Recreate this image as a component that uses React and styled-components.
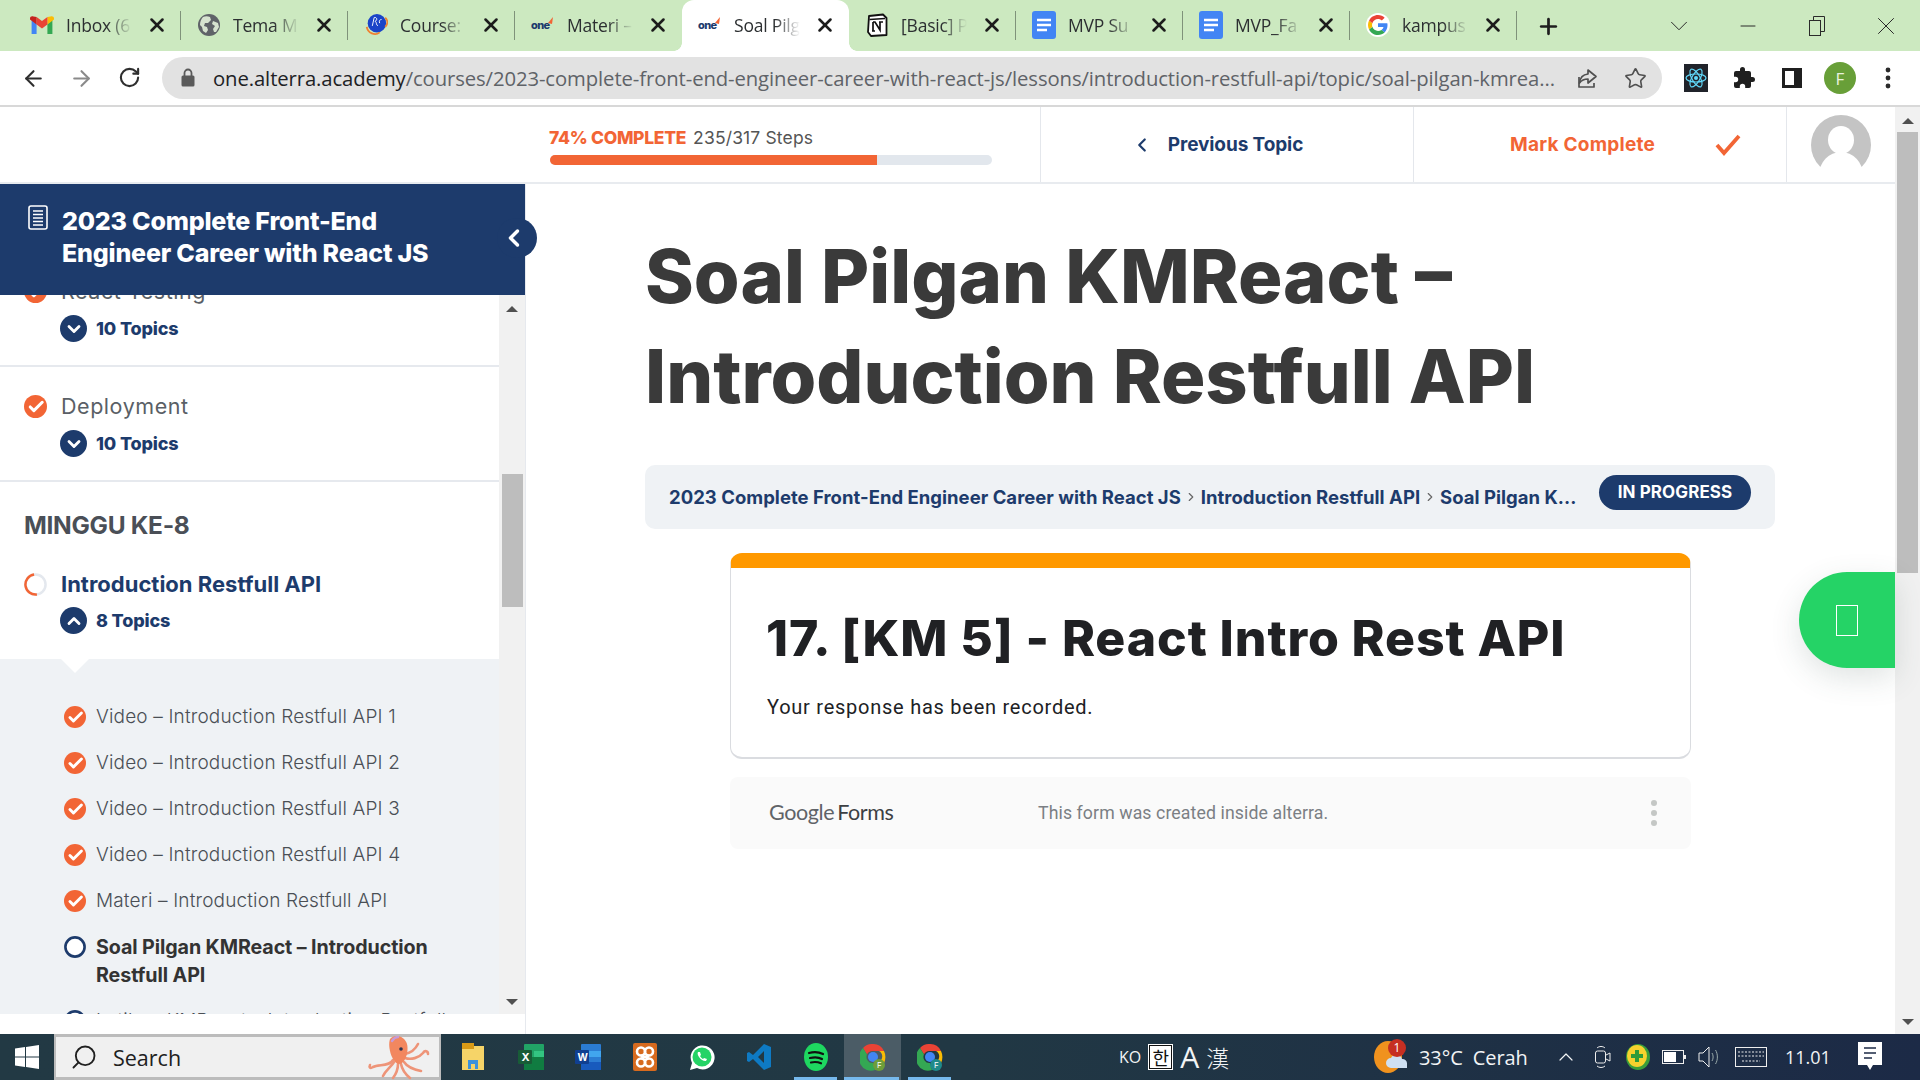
import React from "react";
import styled, { createGlobalStyle } from "styled-components";
import { ArrowLeft, ArrowRight, RotateCw, Star, Plus, X, Minus, ChevronDown, ChevronUp, ChevronLeft, ChevronRight, Search as SearchIcon } from "lucide-react";

const Global = createGlobalStyle`
  html, body { margin: 0; padding: 0; height: 100%; overflow: hidden; background: #fff; }
  * { box-sizing: border-box; }
  #root { height: 100%; }
`;

const NAVY = "#1d3b6c";
const ORANGE = "#f26535";
const UI = `"Inter", "Noto Sans", sans-serif`;
const SYS = `"Open Sans", "Noto Sans", sans-serif`;

const Screen = styled.div`
  width: 1920px; height: 1080px; display: flex; flex-direction: column; font-family: ${UI}; overflow: hidden;
`;

/* ---------- browser chrome ---------- */
const TabStrip = styled.div`
  height: 51px; background: #cce9c0; display: flex; padding-left: 14px; align-items: flex-end; flex: none;
`;
const TabItem = styled.div`
  width: 167px; height: 51px; display: flex; align-items: center; padding: 0 13px 1px 16px; gap: 12px;
  position: relative; flex: none;
  background: ${p => p.$active ? "#fff" : "transparent"};
  border-radius: ${p => p.$active ? "12px 12px 0 0" : "0"};
  &::after {
    content: ""; position: absolute; right: 0; top: 11px; bottom: 11px; width: 1px;
    background: ${p => p.$sep ? "#7f927a" : "transparent"};
  }
  ${p => p.$active ? `
    &::before {
      content: ""; position: absolute; left: -8px; bottom: 0; width: 8px; height: 8px;
      background: radial-gradient(circle at 0 0, transparent 7.5px, #fff 8px);
    }
    &::after {
      left: 100%; right: auto; top: auto; bottom: 0; width: 8px; height: 8px;
      background: radial-gradient(circle at 100% 0, transparent 7.5px, #fff 8px);
    }` : ""}
`;
const TabIcon = styled.span`
  width: 24px; height: 24px; display: flex; align-items: center; justify-content: center; flex: none;
`;
const TabTitle = styled.span`
  width: 66px; flex: none; white-space: nowrap; font: 400 17.5px ${SYS}; color: #2c2f31; letter-spacing: -0.2px;
  -webkit-mask-image: linear-gradient(90deg, #000 62%, transparent 100%);
  mask-image: linear-gradient(90deg, #000 62%, transparent 100%);
`;
const TabClose = styled.span`
  display: flex; margin-left: auto; flex: none;
`;
const NewTab = styled.div`
  margin-left: 19px; height: 50px; display: flex; align-items: center; color: #1e1e1e;
`;
const WinControls = styled.div`
  margin-left: auto; display: flex; height: 51px; align-items: center; color: #2a2a2a;
`;
const WinBtn = styled.div`
  width: ${p => p.$w || 70}px; height: 50px; display: flex; align-items: center; justify-content: center;
`;
const Toolbar = styled.div`
  height: 56px; background: #fff; display: flex; align-items: center; flex: none; border-bottom: 2px solid #d8d8d8;
`;
const NavBtn = styled.div`
  width: ${p => p.$w || 48}px; display: flex; justify-content: center; color: ${p => p.$dim ? "#8a8a8a" : "#2f2f2f"};
`;
const NavGroup = styled.div`
  display: flex; width: 162px; padding-left: 9px; flex: none;
`;
const Omnibox = styled.div`
  width: 1500px; height: 42px; border-radius: 21px; background: #e2e2e2; display: flex; align-items: center; padding: 0 3px 0 18px; flex: none;
`;
const UrlText = styled.div`
  margin-left: 17px; width: 1345px; flex: none; font: 400 20.3px ${SYS}; color: #5f6368; white-space: nowrap; letter-spacing: -0.1px;
  b { font-weight: 400; color: #202124; }
`;
const OmniIcon = styled.div`
  width: 48px; flex: none; display: flex; justify-content: center; color: #505050; margin-left: ${p => p.$ml || 0}px;
`;
const ExtIcons = styled.div`
  display: flex; align-items: center; margin-left: 10px;
`;
const ExtCell = styled.div`
  width: 48px; display: flex; justify-content: center;
`;
const Profile = styled.div`
  width: 32px; height: 32px; border-radius: 50%; background: #689f38; color: #e9f2df; display: flex; align-items: center; justify-content: center; font: 400 17px ${SYS};
`;

/* ---------- page ---------- */
const Viewport = styled.div`
  flex: 1; display: flex; min-height: 0; position: relative; background: #fff;
`;
const PageCol = styled.div`
  flex: 1; display: flex; flex-direction: column; min-width: 0;
`;
const HeaderBar = styled.div`
  height: 77px; display: flex; border-bottom: 2px solid #e8ebef; flex: none;
`;
const ProgressCell = styled.div`
  width: 516px; padding: 19px 0 0 24px; border-right: 1px solid #e4e7ec; margin-left: 525px; flex: none;
`;
const ProgressText = styled.div`
  font: 400 17.5px/24px ${UI}; color: #555; letter-spacing: 0.15px; white-space: nowrap;
  b { font-weight: 800; color: ${ORANGE}; margin-right: 7px; font-size: 17.5px; letter-spacing: -0.3px; }
`;
const ProgressTrack = styled.div`
  margin-top: 5px; margin-left: 1px; width: 442px; height: 10px; border-radius: 5px; background: #e2e7ed; overflow: hidden;
`;
const ProgressFill = styled.div`
  height: 100%; background: ${ORANGE};
`;
const HeadAction = styled.div`
  width: 373px; display: flex; align-items: center; justify-content: ${p => p.$between ? "space-between" : "center"};
  padding: ${p => p.$between ? "0 45px 0 96px" : "0 20px 0 0"}; border-right: 1px solid #e4e7ec; flex: none;
  color: ${p => p.$orange ? ORANGE : NAVY}; font: 700 19px ${UI}; gap: 15px; letter-spacing: ${p => p.$orange ? "0.25px" : "-0.1px"};
`;
const AvatarCell = styled.div`
  flex: 1; display: flex; padding: 8px 0 0 24px;
`;
const BodyRow = styled.div`
  flex: 1; display: flex; min-height: 0;
`;
const Sidebar = styled.aside`
  width: 526px; flex: none; display: flex; flex-direction: column; border-right: 1px solid #e6e9ee; position: relative; padding-bottom: 20px;
`;
const SideHead = styled.div`
  height: 111px; width: 525px; background: ${NAVY}; color: #fff; display: flex; gap: 14px; padding: 21px 0 0 28px; flex: none; position: relative; z-index: 2;
`;
const SideTitle = styled.div`
  font: 800 25px/32px ${UI}; letter-spacing: -0.2px; white-space: nowrap;
`;
const Toggle = styled.div`
  position: absolute; right: -12px; top: 34px; width: 40px; height: 40px; border-radius: 50%; background: ${NAVY}; display: flex; align-items: center; justify-content: center; padding-right: 6px;
`;
const SideBody = styled.div`
  flex: 1; display: flex; min-height: 0;
`;
const SideList = styled.div`
  width: 499px; flex: none; overflow: hidden;
`;
const Lesson = styled.div`
  height: ${p => p.$h || 115}px; padding: 27px 0 0 24px; border-bottom: ${p => p.$line ? "2px solid #e6e9ee" : "none"}; margin-top: ${p => p.$mt || 0}px; background: #fff;
`;
const LessonTitle = styled.div`
  display: flex; align-items: center; gap: 14px; height: 24px; font: ${p => p.$open ? 700 : 400} ${p => p.$open ? 22 : 21.5}px/24px ${UI}; color: ${p => p.$open ? NAVY : "#5a5f66"}; letter-spacing: ${p => p.$open ? "0px" : "0.55px"};
`;
const TopicToggle = styled.div`
  display: flex; align-items: center; gap: 9px; margin: ${p => p.$mt ?? 12}px 0 0 36px; height: 27px; font: 800 18px ${UI}; color: ${NAVY}; letter-spacing: -0.15px;
`;
const RoundChevron = styled.span`
  width: 27px; height: 27px; border-radius: 50%; background: ${NAVY}; color: #fff; display: flex; align-items: center; justify-content: center;
`;
const Week = styled.div`
  height: 63px; padding: 30px 0 0 24px; font: 700 24.5px/26px ${UI}; color: #4a4f57; letter-spacing: -0.3px; background: #fff;
`;
const TopicPanel = styled.div`
  background: #eff2f5; padding-top: 35px; position: relative;
  &::before {
    content: ""; position: absolute; left: 61px; top: 0; border-left: 14px solid transparent; border-right: 14px solid transparent; border-top: 14px solid #fff;
  }
`;
const TopicRow = styled.div`
  display: flex; gap: 10px; padding: 9px 30px 9px 64px; font: ${p => p.$cur ? 700 : 300} ${p => p.$cur ? 19.7 : 19}px/28px ${UI}; color: ${p => p.$cur ? "#333" : "#4a4f55"}; letter-spacing: ${p => p.$cur ? "-0.1px" : "0.16px"};
`;
const TopicIcon = styled.span`
  flex: none; width: 22px; height: 28px; display: flex; align-items: center;
`;
const FakeTrack = styled.div`
  width: ${p => p.$w}px; flex: none; background: #f1f1f1; display: flex; flex-direction: column; align-items: center; position: relative;
`;
const ScrollArrow = styled.div`
  width: 0; height: 0; border-left: 6px solid transparent; border-right: 6px solid transparent; flex: none;
  ${p => p.$down ? "border-top: 6px solid #505050; margin-bottom: 9px;" : "border-bottom: 6px solid #505050; margin-top: 11px;"}
`;
const ScrollThumb = styled.div`
  width: ${p => p.$w}px; height: ${p => p.$h}px; background: #bdbdbd; margin-top: ${p => p.$top}px; flex: none;
`;
const Spacer = styled.div`
  flex: 1;
`;
const Content = styled.main`
  flex: 1; padding: 42px 0 0 119px; min-width: 0;
`;
const Title = styled.h1`
  margin: 0; font: 800 74px/100px ${UI}; color: #3a3a3a; letter-spacing: 0; width: 1000px;
`;
const Crumbs = styled.div`
  margin-top: 39px; width: 1130px; height: 64px; border-radius: 10px; background: #eff2f5; display: flex; align-items: center; padding: 0 24px;
`;
const CrumbText = styled.div`
  display: flex; align-items: center; gap: 2px; font: 700 18.5px ${UI}; color: ${NAVY}; white-space: nowrap; flex: 1; letter-spacing: 0.02px; margin-top: -1px;
`;
const CrumbSep = styled.span`
  color: #666; display: flex; margin: 0 1px;
`;
const Badge = styled.div`
  width: 152px; height: 35px; border-radius: 18px; background: ${NAVY}; color: #fff; font: 700 17px/34px ${UI}; text-align: center; letter-spacing: 0.1px; margin-top: -10px; flex: none;
`;
const FormWrap = styled.div`
  margin: 24px 0 0 85px; width: 961px;
`;
const FormCard = styled.div`
  height: 206px; border-radius: 12px; border: 1px solid #dadce0; border-top: 15px solid #ff9900; padding: 37px 30px 0 35px; border-bottom-width: 2px;
`;
const FormTitle = styled.div`
  font: 800 50px/66px ${UI}; color: #202124; letter-spacing: 0.9px; white-space: nowrap;
`;
const FormMsg = styled.div`
  margin: 22px 0 0 1px; font: 400 20px/28px Roboto, sans-serif; color: #202124; letter-spacing: 0.75px;
`;
const FormFoot = styled.div`
  margin-top: 18px; height: 72px; background: #fafafa; border-radius: 8px; display: flex; align-items: center; padding: 0 34px 0 39px;
`;
const GFLogo = styled.div`
  width: 269px; margin-top: -3px; font: 400 21.5px Lato, sans-serif; color: #5f6368; letter-spacing: -0.4px; word-spacing: -2px; span { color: #3c4043; }
`;
const FootNote = styled.div`
  flex: 1; font: 400 17.7px Roboto, sans-serif; color: #7b7f84; letter-spacing: 0.1px;
`;
const Dots = styled.div`
  display: flex; flex-direction: column; gap: 4px;
`;
const Dot = styled.span`
  width: 6px; height: 6px; border-radius: 50%; background: #c4c7c5;
`;
const Fab = styled.div`
  position: absolute; left: 1799px; top: 465px; width: 96px; height: 96px; border-radius: 48px 0 0 48px; background: #25d366; display: flex; align-items: center; justify-content: center;
  box-shadow: 0 10px 30px rgba(60,90,80,0.16); z-index: 3;
`;
const Tofu = styled.span`
  width: 22px; height: 31px; border: 1.5px solid #fff;
`;

/* ---------- taskbar ---------- */
const Taskbar = styled.div`
  height: 46px; flex: none; background: linear-gradient(90deg, #223944 0%, #213844 50%, #1c2a46 100%); display: flex; align-items: center; color: #f2f4f5;
`;
const StartBtn = styled.div`
  width: 54px; display: flex; justify-content: center;
`;
const SearchBox = styled.div`
  width: 387px; height: 46px; background: #f0f0f0; border: 3px solid #bcbcbc; border-width: 3px 2px 3px 2px; display: flex; align-items: center; padding-left: 14px; color: #202020; gap: 15px; position: relative; flex: none;
`;
const SearchLabel = styled.span`
  font: 400 21.5px ${SYS}; margin-top: 1px;
`;
const Octo = styled.span`
  position: absolute; right: 8px; bottom: -3px; display: flex;
`;
const Apps = styled.div`
  display: flex; padding-left: 4px; height: 46px; flex: none;
`;
const AppCell = styled.div`
  width: 57px; height: 46px; display: flex; align-items: center; justify-content: center; position: relative;
  background: ${p => p.$active ? "#4b5c66" : "transparent"};
  ${p => p.$run ? `&::after { content: ""; position: absolute; left: ${p.$active ? 0 : 7}px; right: ${p.$active ? 2 : 7}px; bottom: 0; height: 3px; background: #76b9ed; }` : ""}
`;
const Ime = styled.div`
  margin-left: 161px; display: flex; align-items: center; width: 254px; flex: none; font: 400 16px ${SYS};
`;
const HanBox = styled.span`
  margin-left: 8px; width: 23px; height: 24px; background: #fff; color: #111; border: 1px solid #111; outline: 1px solid #fff; display: flex; align-items: center; justify-content: center; font: 400 18px "Noto Sans CJK KR", sans-serif;
`;
const ImeA = styled.span`
  margin-left: 8px; font: 400 30px ${SYS}; line-height: 30px;
`;
const ImeHan = styled.span`
  margin-left: 7px; font: 300 23px "Noto Sans CJK TC", sans-serif;
`;
const Weather = styled.div`
  display: flex; align-items: center; width: 181px; flex: none; position: relative; gap: 12px; font: 400 20px ${SYS}; white-space: nowrap; letter-spacing: -0.1px;
`;
const WeatherBadge = styled.span`
  position: absolute; left: 15px; top: -1px; width: 18px; height: 18px; border-radius: 50%; background: #c62f22; color: #fff; font: 400 12px/18px ${SYS}; text-align: center;
`;
const Tray = styled.div`
  display: flex; align-items: center; flex: 1; padding-right: 36px;
`;
const TrayCell = styled.span`
  display: flex; align-items: center; justify-content: center; flex: none; margin-left: ${p => p.$ml || 0}px;
`;
const Clock = styled.span`
  margin-left: 18px; font: 400 18px ${SYS}; flex: none; width: 42px;
`;

/* ---------- icons ---------- */
const DoneIcon = ({ s = 22 }) => (
  <svg width={s} height={s} viewBox="0 0 24 24">
    <circle cx="12" cy="12" r="12" fill={ORANGE} />
    <path d="M6.500 12.500l3.800 3.800L19 7.600" fill="none" stroke="#fff" strokeWidth="3.200" strokeLinecap="round" strokeLinejoin="round" />
  </svg>
);
const PartIcon = () => (
  <svg width="23" height="23" viewBox="0 0 24 24">
    <circle cx="12" cy="12" r="10.500" fill="none" stroke="#e4e8ee" strokeWidth="2.600" />
    <path d="M12 1.500A10.500 10.500 0 0 0 12 22.500" transform="rotate(-8 12 12)" fill="none" stroke={ORANGE} strokeWidth="2.600" />
  </svg>
);
const TodoIcon = () => (
  <svg width="22" height="22" viewBox="0 0 22 22"><circle cx="11" cy="11" r="9.600" fill="#fff" stroke={NAVY} strokeWidth="2.600" /></svg>
);
const TickIcon = () => (
  <svg width="26" height="22" viewBox="0 0 26 22"><path d="M2 11l7 8L24 2" fill="none" stroke={ORANGE} strokeWidth="3.800" strokeLinejoin="miter" /></svg>
);
const GmailIcon = () => (
  <svg width="24" height="20" viewBox="0 0 24 18">
    <path d="M1.600 18V4l5 4v10z" fill="#4285f4" /><path d="M22.400 18V4l-5 4v10z" fill="#34a853" />
    <path d="M17.400 1v7.400L24 3.400V2.400C24 .6 22 -.4 20.500.6z" fill="#fbbc04" />
    <path d="M6.600 8.400V1L12 5l5.400-4v7.400L12 12.400z" fill="#ea4335" />
    <path d="M0 2.400v1L6.600 8.400V1L3.500.6C2-.4 0 .6 0 2.400z" fill="#c5221f" />
  </svg>
);
const GlobeIcon = () => (
  <svg width="22" height="22" viewBox="0 0 22 22">
    <circle cx="11" cy="11" r="11" fill="#5f6368" />
    <path d="M5 3c2-1 5-1 7 0l1 3-3 3-3 0-1 3 3 1 1 3-2 3-3-2-1-4-2-2c0-3 1-6 3-8zM15 7l5 2 1 4-3 5-2 0-1-3 2-3-3-2z" fill="#d6e3cf" />
  </svg>
);
const CourseIcon = () => (
  <svg width="26" height="26" viewBox="0 0 26 26">
    <circle cx="14" cy="11" r="10" fill="#1a44c8" />
    <path d="M3 15c1 7 9 10 14 6M23 5c3 3 3 7 0 10" fill="none" stroke="#f08030" strokeWidth="2" />
    <path d="M11 5c3-1 4 3 1 4 2 1 1 4 3 5M11 5l-2 9M19 7c-2 0-3 2-2 4" fill="none" stroke="#fff" strokeWidth="1" />
  </svg>
);
const OneLogo = () => (
  <svg width="24" height="20" viewBox="0 0 24 20">
    <text x="0" y="14" fontFamily="Inter, sans-serif" fontWeight="800" fontSize="11" letterSpacing="-0.6" fill="#1d3b6c">one</text>
    <path d="M17 8l5-6-1 7z" fill="#f26535" />
  </svg>
);
const NotionIcon = () => (
  <svg width="24" height="24" viewBox="0 0 24 24">
    <path d="M4 3l14-1.500L21.500 5v17L6 23l-3-4z" fill="#fff" stroke="#111" strokeWidth="1.800" strokeLinejoin="round" />
    <path d="M4.500 6.500L20 5.500" stroke="#111" strokeWidth="1.600" />
    <path d="M8 9h2l5 8V9h2M8 9v9M7 18h3M14 9h4" fill="none" stroke="#111" strokeWidth="1.700" />
  </svg>
);
const DocsIcon = () => (
  <svg width="24" height="28" viewBox="0 0 24 28">
    <rect width="24" height="28" rx="3" fill="#4285f4" />
    <path d="M5 9h14M5 14h14M5 19h10" stroke="#fff" strokeWidth="2.400" />
  </svg>
);
const GoogleIcon = () => (
  <svg width="24" height="24" viewBox="0 0 48 48">
    <circle cx="24" cy="24" r="24" fill="#fff" />
    <path d="M43 24.500c0-1.400-.1-2.600-.4-3.800H24v7.300h10.900c-.5 2.500-1.900 4.500-4 5.900l6.400 5C41 34.500 43 30 43 24.500z" fill="#4285f4" />
    <path d="M24 44c5.400 0 9.900-1.800 13.300-4.900l-6.400-5c-1.800 1.200-4.100 1.900-6.900 1.900-5.300 0-9.700-3.500-11.300-8.300l-6.600 5.100C9.400 39.500 16.100 44 24 44z" fill="#34a853" />
    <path d="M12.700 27.700c-.4-1.200-.6-2.400-.6-3.700s.2-2.500.6-3.700l-6.600-5.100C4.700 17.900 4 20.900 4 24s.7 6.100 2.100 8.800z" fill="#fbbc04" />
    <path d="M24 12c2.900 0 5.600 1 7.600 3l5.700-5.700C33.900 6.100 29.400 4 24 4 16.100 4 9.400 8.500 6.100 15.200l6.600 5.100C14.300 15.500 18.700 12 24 12z" fill="#ea4335" />
  </svg>
);
const LockIcon = () => (
  <svg width="16" height="20" viewBox="0 0 16 20" style={{ flex: "none" }}><rect x="1.500" y="7.500" width="13" height="11" rx="1.500" fill="#5a5a5a" /><path d="M4.500 8V5a3.500 3.500 0 0 1 7 0v3" fill="none" stroke="#5a5a5a" strokeWidth="1.800" /></svg>
);
const ShareIcon = () => (
  <svg width="24" height="24" viewBox="0 0 24 24" fill="none" stroke="#505050" strokeWidth="1.700" strokeLinejoin="round">
    <path d="M4 11v10h15v-4" /><path d="M13 4l8 6.500-8 6.500v-4c-4 0-6.500 1.200-8.500 4 .5-5 3.500-8.500 8.500-9z" />
  </svg>
);
const ReactExt = () => (
  <svg width="24" height="28" viewBox="0 0 24 28">
    <rect width="24" height="28" fill="#20232a" />
    <g fill="none" stroke="#61dafb" strokeWidth="1.200">
      <ellipse cx="12" cy="14" rx="10" ry="4" /><ellipse cx="12" cy="14" rx="10" ry="4" transform="rotate(60 12 14)" /><ellipse cx="12" cy="14" rx="10" ry="4" transform="rotate(120 12 14)" />
    </g>
    <circle cx="12" cy="14" r="2" fill="#61dafb" />
  </svg>
);
const PuzzleIcon = () => (
  <svg width="24" height="24" viewBox="0 0 24 24"><path d="M20.500 11H19V7a2 2 0 0 0-2-2h-4V3.500a2.500 2.500 0 0 0-5 0V5H4a2 2 0 0 0-2 2v3.800h1.500a2.700 2.700 0 0 1 0 5.400H2V20a2 2 0 0 0 2 2h3.800v-1.500a2.700 2.700 0 0 1 5.400 0V22H17a2 2 0 0 0 2-2v-4h1.500a2.500 2.500 0 0 0 0-5z" fill="#1f1f1f" /></svg>
);
const PanelIcon = () => (
  <svg width="20" height="20" viewBox="0 0 20 20"><rect x="1.500" y="1.500" width="17" height="17" fill="none" stroke="#1f1f1f" strokeWidth="3" /><rect x="12" y="2" width="6" height="16" fill="#1f1f1f" /></svg>
);
const MenuDots = () => (
  <svg width="6" height="22" viewBox="0 0 6 22"><circle cx="3" cy="3" r="2.400" fill="#2a2a2a" /><circle cx="3" cy="11" r="2.400" fill="#2a2a2a" /><circle cx="3" cy="19" r="2.400" fill="#2a2a2a" /></svg>
);
const RestoreIcon = () => (
  <svg width="16" height="20" viewBox="0 0 16 20" fill="none" stroke="#2a2a2a" strokeWidth="1"><rect x="0.500" y="4.500" width="11" height="15" fill="#cce9c0" /><path d="M4.500 4.500V.5h11v15h-4" /></svg>
);
const BookIcon = () => (
  <svg width="20" height="25" viewBox="0 0 20 25" fill="none" stroke="#fff" style={{ flex: "none" }}><rect x="1" y="1" width="18" height="23" rx="2" strokeWidth="1.600" /><path d="M5 6h10M5 9.500h10M5 13h10M5 16.500h10M5 20h10" strokeWidth="1.500" /></svg>
);
const Avatar = () => (
  <svg width="60" height="60" viewBox="0 0 60 60">
    <defs><clipPath id="av"><circle cx="30" cy="30" r="30" /></clipPath></defs>
    <g clipPath="url(#av)"><rect width="60" height="60" fill="#c4c4c4" /></g>
    <ellipse cx="30" cy="25" rx="13" ry="14" fill="#fff" />
    <ellipse cx="30" cy="60" rx="22" ry="23" fill="#fff" />
    <rect x="0" y="55" width="60" height="5" fill="#fff" />
  </svg>
);
const WinLogo = () => (
  <svg width="24" height="24" viewBox="0 0 24 24" fill="#fff"><path d="M0 3.400l10-1.400v9.500H0zM11 1.900L24 0v11.500H11zM0 12.500h10V22L0 20.600zM11 12.500h13V24l-13-1.900z" /></svg>
);
const OctoIcon = () => (
  <svg width="64" height="46" viewBox="0 0 64 46" fill="none" strokeLinecap="round">
    <g stroke="#ee9478" strokeWidth="2.600">
      <path d="M26 26C22 33 12 30 6 33c-3 2-4 0-3-2" />
      <path d="M27 28c-3 5-8 8-11 14" />
      <path d="M31 30c0 5-2 10-5 14" />
      <path d="M34 30c1 5 4 10 9 14" />
      <path d="M37 28c4 6 12 8 17 9" />
      <path d="M38 24c6 2 14 0 18-5 2-3 5-2 5 1" />
      <path d="M38 20c5-1 10-4 13-10" />
    </g>
    <path d="M23 5c4-5 14-4 17 5 2 8-2 20-8 20S20 14 23 5z" fill="#f2875f" />
    <path d="M25 7c2-3 4-4 6-4" stroke="#c79ad6" strokeWidth="2.400" />
    <circle cx="34" cy="15" r="1.800" fill="#2d3350" />
  </svg>
);
const FolderIcon = () => (
  <svg width="24" height="28" viewBox="0 0 24 28"><rect y="3" width="22" height="24" fill="#f6d468" /><rect width="12" height="6" fill="#d99a16" /><path d="M6 26V17h10v9h-3v-5H9v5z" fill="#3c92dc" /></svg>
);
const ExcelIcon = () => (
  <svg width="26" height="26" viewBox="0 0 26 26"><rect x="6" width="20" height="26" rx="1" fill="#21a366" /><rect x="16" y="7" width="10" height="6" fill="#33c481" /><rect x="6" y="13" width="20" height="13" fill="#107c41" /><rect y="6" width="14" height="14" rx="1" fill="#185c37" /><text x="3.500" y="17" fontSize="11" fontWeight="700" fill="#fff" fontFamily="Inter">X</text></svg>
);
const WordIcon = () => (
  <svg width="26" height="26" viewBox="0 0 26 26"><rect x="6" width="20" height="26" rx="1" fill="#2b7cd3" /><rect x="6" y="7" width="20" height="6" fill="#41a5ee" /><rect x="6" y="18" width="20" height="8" fill="#185abd" /><rect y="6" width="14" height="14" rx="1" fill="#103f91" /><text x="2.500" y="17" fontSize="10" fontWeight="700" fill="#fff" fontFamily="Inter">W</text></svg>
);
const XamppIcon = () => (
  <svg width="24" height="28" viewBox="0 0 24 28"><rect width="24" height="28" rx="2" fill="#d76a1e" /><g fill="none" stroke="#fff" strokeWidth="2.600"><circle cx="8" cy="8.500" r="4" /><circle cx="16" cy="8.500" r="4" /><circle cx="8" cy="19.500" r="4" /><circle cx="16" cy="19.500" r="4" /><path d="M8 12.500L16 15.500M16 12.500L8 15.500" /></g></svg>
);
const WaIcon = () => (
  <svg width="26" height="28" viewBox="0 0 26 28"><path d="M1 27l2-7a12 12 0 1 1 5 5z" fill="#fff" /><circle cx="13" cy="14" r="9.500" fill="#25d366" /><path d="M9 9c-2 3 4 10 8 9l1-2-3-1-1 1c-1-.5-2.500-2-3-3l1-1-1-3z" fill="#fff" /></svg>
);
const VsIcon = () => (
  <svg width="24" height="28" viewBox="0 0 24 28"><path d="M17 1l7 3v20l-7 3L6 16l-4 3-2-1v-8l2-1 4 3zM17 8l-6 6 6 6z" fill="#0e7ac4" fillRule="evenodd" /></svg>
);
const SpotifyIcon = () => (
  <svg width="24" height="28" viewBox="0 0 24 28"><ellipse cx="12" cy="14" rx="12" ry="14" fill="#1ed760" /><g fill="none" stroke="#111" strokeWidth="2.200" strokeLinecap="round"><path d="M5 10c5-1.500 10-1 14 1" /><path d="M6 15c4-1 9-.7 12 1" /><path d="M7 19.500c4-1 7-.5 10 .8" /></g></svg>
);
const ChromeIcon = ({ badge = "#6d9e3a" }) => (
  <svg width="26" height="28" viewBox="0 0 26 28">
    <path d="M13 1a12 13 0 0 1 11 7H13a6 6 0 0 0-6 3.500L3 5a12 13 0 0 1 10-4z" fill="#ea4335" />
    <path d="M24 8a12 13 0 0 1-9 19l5-9a6 6 0 0 0-1-10z" fill="#fbbc04" />
    <path d="M3 5l4 6.500a6 6 0 0 0 6 8.500l2 7A12 13 0 0 1 3 5z" fill="#34a853" />
    <circle cx="13" cy="14" r="5" fill="#4285f4" />
    <circle cx="19" cy="22" r="6" fill={badge} />
    <text x="17" y="25" fontSize="8" fill="#fff" fontFamily="Inter">F</text>
  </svg>
);
const WeatherIcon = () => (
  <svg width="34" height="34" viewBox="0 0 34 34"><ellipse cx="15" cy="17" rx="14" ry="16" fill="#f0921e" /><path d="M34 28H18a5 5 0 0 1 0-10 6 6 0 0 1 11 1 4.500 4.500 0 0 1 5 4z" fill="#cfe0f2" /></svg>
);
const MeetIcon = () => (
  <svg width="16" height="24" viewBox="0 0 16 24" fill="none" stroke="#eee" strokeWidth="1"><rect x="0.500" y="6" width="10" height="12" rx="2" /><path d="M11 10l4-2v8l-4-2M2 3c2-2 6-2 8 0M2 21c2 2 6 2 8 0" /></svg>
);
const ShieldIcon = () => (
  <svg width="24" height="26" viewBox="0 0 24 26"><ellipse cx="12" cy="13" rx="12" ry="13" fill="#3a9e3a" /><ellipse cx="11" cy="12" rx="10" ry="11" fill="#f6d22e" /><path d="M9 6h4v4h4v4h-4v4H9v-4H5v-4h4z" fill="#2e9c39" /></svg>
);
const BatteryIcon = () => (
  <svg width="24" height="14" viewBox="0 0 24 14"><rect x="0.500" y="0.500" width="21" height="13" fill="none" stroke="#eee" /><rect x="2" y="2" width="12" height="10" fill="#fff" /><rect x="22" y="5" width="2" height="4" fill="#eee" /></svg>
);
const SpeakerIcon = () => (
  <svg width="22" height="24" viewBox="0 0 22 24" fill="none" stroke="#eee" strokeWidth="1"><path d="M1 8h4l6-6v20l-6-6H1z" /><path d="M14 8c1.500 2 1.500 6 0 8M17.500 5c2.500 4 2.500 10 0 14" stroke="#9aa" /></svg>
);
const KeyboardIcon = () => (
  <svg width="32" height="20" viewBox="0 0 32 20" fill="none" stroke="#eee"><rect x="0.500" y="0.500" width="31" height="19" /><path d="M3 5h26M3 9h26M7 14h18" strokeDasharray="2 1.500" /></svg>
);
const NotifIcon = () => (
  <svg width="26" height="30" viewBox="0 0 26 30"><path d="M0 0h24v23h-9l-3 5-3-5H0z" fill="#fff" /><path d="M6 6h12M6 11h12M6 16h8" stroke="#1c2a46" strokeWidth="1.500" /></svg>
);

const tabs = [
  ["Inbox (6", <GmailIcon />, true],
  ["Tema Mi", <GlobeIcon />, true],
  ["Course: I", <CourseIcon />, true],
  ["Materi –", <OneLogo />, false],
  ["Soal Pilg", <OneLogo />, false, true],
  ["[Basic] P", <NotionIcon />, true],
  ["MVP Su", <DocsIcon />, true],
  ["MVP_Fa", <DocsIcon />, true],
  ["kampus", <GoogleIcon />, true],
];
const topics = ["Video – Introduction Restfull API 1", "Video – Introduction Restfull API 2", "Video – Introduction Restfull API 3", "Video – Introduction Restfull API 4", "Materi – Introduction Restfull API"];
const apps = [
  [<FolderIcon />], [<ExcelIcon />], [<WordIcon />], [<XamppIcon />], [<WaIcon />], [<VsIcon />],
  [<SpotifyIcon />, true], [<ChromeIcon />, true, true], [<ChromeIcon badge="#1f8a8a" />, true],
];

export default function App() {
  return (
    <Screen>
      <Global />
      <TabStrip>
        {tabs.map(([t, ic, sep, act]) => (
          <TabItem key={t} $active={act} $sep={sep}>
            <TabIcon>{ic}</TabIcon>
            <TabTitle>{t}</TabTitle>
            <TabClose><X size={22} strokeWidth={2.8} color="#1c1c1c" /></TabClose>
          </TabItem>
        ))}
        <NewTab><Plus size={25} strokeWidth={2.6} /></NewTab>
        <WinControls>
          <WinBtn $w={70}><ChevronDown size={30} strokeWidth={0.8} /></WinBtn>
          <WinBtn $w={68}><Minus size={24} strokeWidth={1} /></WinBtn>
          <WinBtn $w={70}><RestoreIcon /></WinBtn>
          <WinBtn $w={68}><X size={30} strokeWidth={0.8} /></WinBtn>
        </WinControls>
      </TabStrip>
      <Toolbar>
        <NavGroup>
          <NavBtn><ArrowLeft size={25} strokeWidth={2} /></NavBtn>
          <NavBtn $dim><ArrowRight size={25} strokeWidth={2} /></NavBtn>
          <NavBtn><RotateCw size={23} strokeWidth={2.2} /></NavBtn>
        </NavGroup>
        <Omnibox>
          <LockIcon />
          <UrlText><b>one.alterra.academy</b>/courses/2023-complete-front-end-engineer-career-with-react-js/lessons/introduction-restfull-api/topic/soal-pilgan-kmrea...</UrlText>
          <OmniIcon $ml={5}><ShareIcon /></OmniIcon>
          <OmniIcon><Star size={23} strokeWidth={1.7} /></OmniIcon>
        </Omnibox>
        <ExtIcons>
          <ExtCell><ReactExt /></ExtCell>
          <ExtCell><PuzzleIcon /></ExtCell>
          <ExtCell><PanelIcon /></ExtCell>
          <ExtCell><Profile>F</Profile></ExtCell>
          <ExtCell><MenuDots /></ExtCell>
        </ExtIcons>
      </Toolbar>
      <Viewport>
        <PageCol>
          <HeaderBar>
            <ProgressCell>
              <ProgressText><b>74% COMPLETE</b>235/317 Steps</ProgressText>
              <ProgressTrack><ProgressFill style={{ width: "74%" }} /></ProgressTrack>
            </ProgressCell>
            <HeadAction><ChevronLeft size={22} strokeWidth={2.4} />Previous Topic</HeadAction>
            <HeadAction $orange $between>Mark Complete<TickIcon /></HeadAction>
            <AvatarCell><Avatar /></AvatarCell>
          </HeaderBar>
          <BodyRow>
            <Sidebar>
              <SideHead>
                <BookIcon />
                <SideTitle>2023 Complete Front-End<br />Engineer Career with React JS</SideTitle>
                <Toggle><ChevronLeft color="#fff" size={28} strokeWidth={3} /></Toggle>
              </SideHead>
              <SideBody>
                <SideList>
                  <Lesson $line $mt={-43}>
                    <LessonTitle><DoneIcon s={23} />React Testing</LessonTitle>
                    <TopicToggle><RoundChevron><ChevronDown size={20} strokeWidth={3.4} /></RoundChevron>10 Topics</TopicToggle>
                  </Lesson>
                  <Lesson $line>
                    <LessonTitle><DoneIcon s={23} />Deployment</LessonTitle>
                    <TopicToggle><RoundChevron><ChevronDown size={20} strokeWidth={3.4} /></RoundChevron>10 Topics</TopicToggle>
                  </Lesson>
                  <Week>MINGGU KE-8</Week>
                  <Lesson $h={114}>
                    <LessonTitle $open><PartIcon />Introduction Restfull API</LessonTitle>
                    <TopicToggle $mt={11}><RoundChevron><ChevronUp size={20} strokeWidth={3.4} /></RoundChevron>8 Topics</TopicToggle>
                  </Lesson>
                  <TopicPanel>
                    {topics.map(t => (
                      <TopicRow key={t}><TopicIcon><DoneIcon /></TopicIcon>{t}</TopicRow>
                    ))}
                    <TopicRow $cur><TopicIcon><TodoIcon /></TopicIcon>Soal Pilgan KMReact – Introduction Restfull API</TopicRow>
                    <TopicRow><TopicIcon><TodoIcon /></TopicIcon>Latihan KMReact – Introduction Restfull API</TopicRow>
                  </TopicPanel>
                </SideList>
                <FakeTrack $w={26}>
                  <ScrollArrow />
                  <ScrollThumb $w={21} $h={133} $top={162} />
                  <Spacer />
                  <ScrollArrow $down />
                </FakeTrack>
              </SideBody>
            </Sidebar>
            <Content>
              <Title>Soal Pilgan KMReact – Introduction Restfull API</Title>
              <Crumbs>
                <CrumbText>
                  2023 Complete Front-End Engineer Career with React JS
                  <CrumbSep><ChevronRight size={14} /></CrumbSep>
                  Introduction Restfull API
                  <CrumbSep><ChevronRight size={14} /></CrumbSep>
                  Soal Pilgan K...
                </CrumbText>
                <Badge>IN PROGRESS</Badge>
              </Crumbs>
              <FormWrap>
                <FormCard>
                  <FormTitle>17. [KM 5] - React Intro Rest API</FormTitle>
                  <FormMsg>Your response has been recorded.</FormMsg>
                </FormCard>
                <FormFoot>
                  <GFLogo>Google <span>Forms</span></GFLogo>
                  <FootNote>This form was created inside alterra.</FootNote>
                  <Dots><Dot /><Dot /><Dot /></Dots>
                </FormFoot>
              </FormWrap>
            </Content>
          </BodyRow>
        </PageCol>
        <FakeTrack $w={25}>
          <ScrollArrow />
          <ScrollThumb $w={21} $h={441} $top={8} />
          <Spacer />
          <ScrollArrow $down />
        </FakeTrack>
        <Fab><Tofu /></Fab>
      </Viewport>
      <Taskbar>
        <StartBtn><WinLogo /></StartBtn>
        <SearchBox>
          <SearchIcon size={28} strokeWidth={1.6} style={{ transform: "scaleX(-1)" }} />
          <SearchLabel>Search</SearchLabel>
          <Octo><OctoIcon /></Octo>
        </SearchBox>
        <Apps>
          {apps.map(([ic, run, act], i) => (
            <AppCell key={i} $run={run} $active={act}>{ic}</AppCell>
          ))}
        </Apps>
        <Ime>KO<HanBox>한</HanBox><ImeA>A</ImeA><ImeHan>漢</ImeHan></Ime>
        <Weather>
          <WeatherIcon /><WeatherBadge>1</WeatherBadge>33°C&nbsp; Cerah
        </Weather>
        <Tray>
          <TrayCell $ml={0}><ChevronUp size={24} strokeWidth={1.2} /></TrayCell>
          <TrayCell $ml={17}><MeetIcon /></TrayCell>
          <TrayCell $ml={15}><ShieldIcon /></TrayCell>
          <TrayCell $ml={12}><BatteryIcon /></TrayCell>
          <TrayCell $ml={12}><SpeakerIcon /></TrayCell>
          <TrayCell $ml={15}><KeyboardIcon /></TrayCell>
          <Clock>11.01</Clock>
          <Spacer />
          <TrayCell><NotifIcon /></TrayCell>
        </Tray>
      </Taskbar>
    </Screen>
  );
}
